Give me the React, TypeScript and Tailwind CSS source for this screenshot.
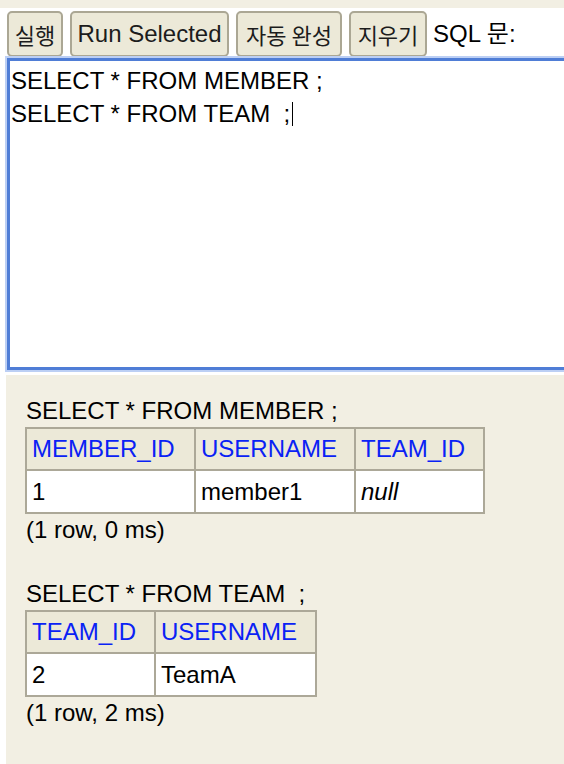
import React from 'react';

const buttons = [
  { label: '실행', w: 'w-[56px]', ko: true },
  { label: 'Run Selected', w: 'w-[159px]', ko: false },
  { label: '자동 완성', w: 'w-[106px]', ko: true },
  { label: '지우기', w: 'w-[78px]', ko: true },
];

const results = [
  {
    sql: 'SELECT * FROM MEMBER ;',
    cols: [
      { name: 'MEMBER_ID', w: 'w-[169px]' },
      { name: 'USERNAME', w: 'w-[160px]' },
      { name: 'TEAM_ID', w: 'w-[129px]' },
    ],
    row: [
      { v: '1' },
      { v: 'member1' },
      { v: 'null', italic: true },
    ],
    info: '(1 row, 0 ms)',
  },
  {
    sql: 'SELECT * FROM TEAM  ;',
    cols: [
      { name: 'TEAM_ID', w: 'w-[129px]' },
      { name: 'USERNAME', w: 'w-[161px]' },
    ],
    row: [{ v: '2' }, { v: 'TeamA' }],
    info: '(1 row, 2 ms)',
  },
];

export default function App() {
  return (
    <div className="w-[564px] h-[764px] overflow-hidden bg-white flex flex-col font-['Liberation_Sans','Noto_Sans_CJK_KR',sans-serif] text-black">
      <div className="h-[8px] bg-[#f2efe3] shrink-0" />

      {/* toolbar */}
      <div className="flex items-center gap-[7px] pl-[7px] pt-[4px] h-[48px] shrink-0">
        {buttons.map((b) => (
          <button
            key={b.label}
            className={`${b.w} h-[46px] flex items-center justify-center rounded-[5px] border-2 border-[#aba794] bg-[#ece9d8] text-[#1c1c1c] whitespace-pre ${
              b.ko ? "text-[22px] font-['Noto_Sans_CJK_KR',sans-serif]" : 'text-[24px]'
            }`}
          >
            {b.label}
          </button>
        ))}
        <span className="text-[24px] whitespace-pre -ml-[1px]">SQL 문:</span>
      </div>

      {/* sql editor */}
      <div className="ml-[7px] mt-[2px] w-[600px] h-[312px] shrink-0 border-[3px] border-[#4f7dd6] shadow-[0_0_0_2px_#bccff4] bg-white px-[1px] pt-[3px] text-[24px] leading-[33px] whitespace-pre">
        <div>SELECT * FROM MEMBER ;</div>
        <div className="flex items-center">
          <span>SELECT * FROM TEAM  ;</span>
          <span className="inline-block w-[1px] h-[24px] bg-black ml-[2px]" />
        </div>
      </div>

      {/* results */}
      <div className="ml-[6px] mt-[5px] flex-1 bg-[#f2efe3] pl-[19px] pt-[22px]">
        {results.map((r, i) => (
          <div key={r.sql} className={i > 0 ? 'mt-[36px]' : ''}>
            <div className="text-[24px] leading-[28px] whitespace-pre pl-[1px]">{r.sql}</div>
            <table className="mt-[2px] border-collapse text-[24px] leading-[28px]">
              <thead>
                <tr>
                  {r.cols.map((c) => (
                    <th
                      key={c.name}
                      className={`${c.w} h-[42px] border-2 border-[#aca898] bg-[#ece9d8] text-left font-normal text-[#0a22f5] pl-[5px] p-0`}
                    >
                      {c.name}
                    </th>
                  ))}
                </tr>
              </thead>
              <tbody>
                <tr>
                  {r.row.map((c, j) => (
                    <td
                      key={j}
                      className={`h-[43px] border-2 border-[#aca898] bg-white pl-[5px] p-0 ${c.italic ? 'italic' : ''}`}
                    >
                      {c.v}
                    </td>
                  ))}
                </tr>
              </tbody>
            </table>
            <div className="mt-[2px] text-[24px] leading-[28px] pl-[1px]">{r.info}</div>
          </div>
        ))}
      </div>
    </div>
  );
}
